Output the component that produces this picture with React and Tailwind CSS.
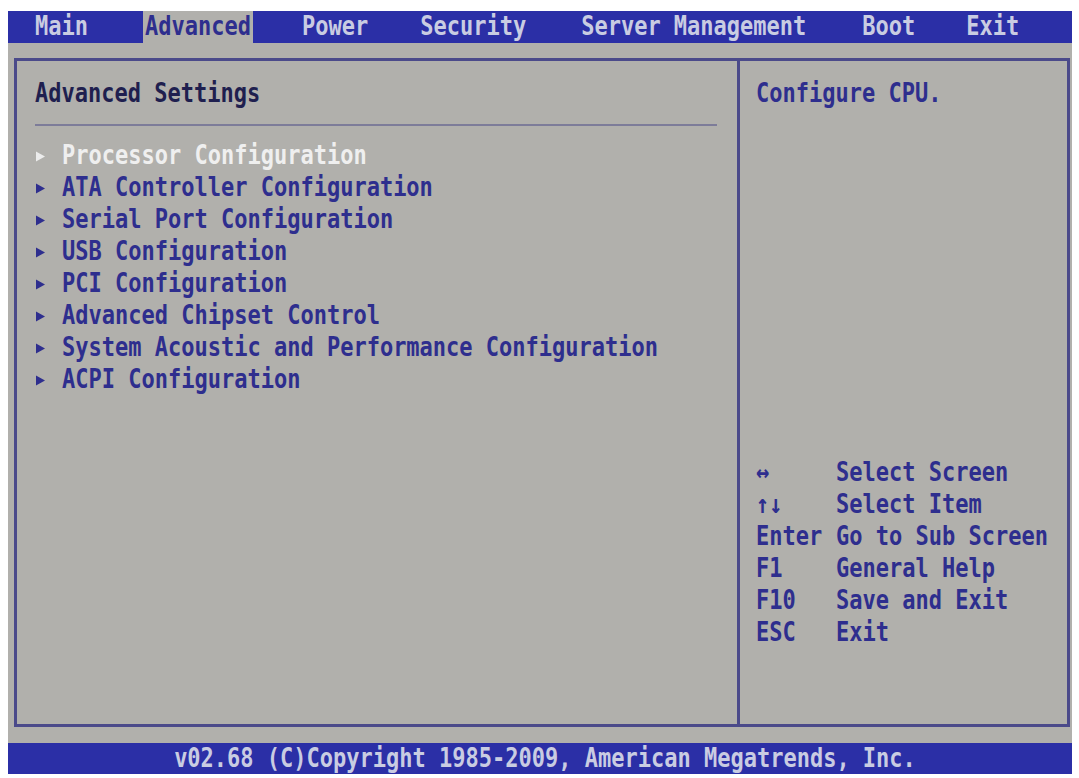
import React from "react";

const Tri = ({ color }) => (
  <svg width="11" height="13" viewBox="0 0 11 13" className="shrink-0">
    <polygon points="1,1.5 10,6.5 1,11.5" fill={color} />
  </svg>
);

const T = ({ children, className = "" }) => (
  <span className={"inline-block scale-y-[1.18] " + className}>{children}</span>
);

const items = [
  "Processor Configuration",
  "ATA Controller Configuration",
  "Serial Port Configuration",
  "USB Configuration",
  "PCI Configuration",
  "Advanced Chipset Control",
  "System Acoustic and Performance Configuration",
  "ACPI Configuration",
];

const keys = [
  ["↔", "Select Screen"],
  ["↑↓", "Select Item"],
  ["Enter", "Go to Sub Screen"],
  ["F1", "General Help"],
  ["F10", "Save and Exit"],
  ["ESC", "Exit"],
];

export default function App() {
  return (
    <div className="w-[1079px] h-[778px] bg-white pt-[11px] pl-[8px] overflow-hidden">
      <div
        className="w-[1064px] h-[763px] bg-[#b1b0ac] flex flex-col font-bold text-[22px] leading-none"
        style={{ fontFamily: '"DejaVu Sans Mono", "Liberation Mono", monospace' }}
      >
        {/* top menu bar */}
        <div className="h-[32px] bg-[#2b2fa6] flex items-stretch text-[#c9cce2] whitespace-pre">
          <div className="ml-[27px] flex items-center"><T>Main</T></div>
          <div className="ml-[55px] px-[2px] flex items-center bg-[#b1b0ac] text-[#2e2e8e]"><T>Advanced</T></div>
          <div className="ml-[49px] flex items-center"><T>Power</T></div>
          <div className="ml-[52px] flex items-center"><T>Security</T></div>
          <div className="ml-[55px] flex items-center"><T>Server Management</T></div>
          <div className="ml-[56px] flex items-center"><T>Boot</T></div>
          <div className="ml-[51px] flex items-center"><T>Exit</T></div>
        </div>

        {/* main panel */}
        <div className="mt-[15px] ml-[6px] w-[1056px] h-[669px] border-[3px] border-[#4b4a8a] flex">
          <div className="w-[720px] h-full pl-[18px] pr-[17px] pt-[20px] flex flex-col">
            <div className="h-[26px] flex items-center text-[#1f1f4f]"><T>Advanced Settings</T></div>
            <div className="mt-[17px] h-[2px] bg-[#7d7c99] w-[682px]" />
            <div className="mt-[14px] flex flex-col">
              {items.map((t, i) => (
                <div key={t} className="h-[32px] flex items-center whitespace-pre">
                  <Tri color={i === 0 ? "#ececec" : "#2e2e8e"} />
                  <T className={"ml-[16px] " + (i === 0 ? "text-[#efefef]" : "text-[#2e2e8e]")}>{t}</T>
                </div>
              ))}
            </div>
          </div>
          <div className="w-[3px] h-full bg-[#4b4a8a]" />
          <div className="flex-1 h-full pl-[16px] pt-[20px] flex flex-col text-[#2e2e8e]">
            <div className="h-[26px] flex items-center"><T>Configure CPU.</T></div>
            <div className="mt-[350px] flex flex-col">
              {keys.map(([k, d]) => (
                <div key={d} className="h-[32px] flex items-center whitespace-pre">
                  <span className="w-[80px]"><T>{k}</T></span>
                  <T>{d}</T>
                </div>
              ))}
            </div>
          </div>
        </div>

        {/* footer */}
        <div className="mt-[16px] h-[31px] bg-[#2b2fa6] flex items-center justify-center text-[#c9cce2] whitespace-pre pl-[10px]">
          <T>v02.68 (C)Copyright 1985-2009, American Megatrends, Inc.</T>
        </div>
      </div>
    </div>
  );
}
